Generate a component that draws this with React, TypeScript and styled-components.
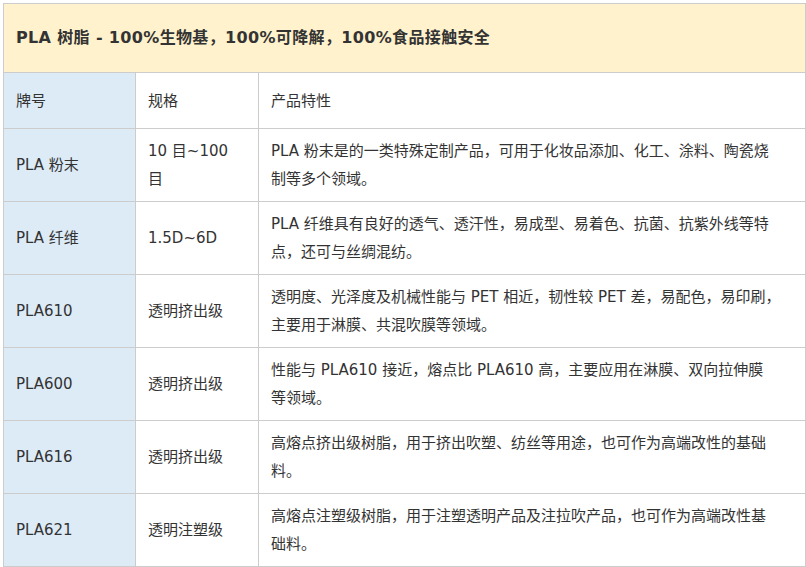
import React from "react";
import styled, { createGlobalStyle } from "styled-components";

const GlobalStyle = createGlobalStyle`
  html, body {
    margin: 0;
    padding: 0;
    overflow: hidden;
    background: #ffffff;
  }
  body {
    font-family: "DejaVu Sans", "Noto Sans CJK SC", sans-serif;
    color: #333333;
  }
`;

const Page = styled.div`
  padding: 3px 0 0 3px;
`;

const Table = styled.table`
  width: 802px;
  table-layout: fixed;
  border-collapse: collapse;
  font-size: 15px;
  line-height: 28px;
`;

const Row = styled.tr<{ $h?: number }>`
  height: ${(p) => (p.$h ? `${p.$h}px` : "auto")};
`;

const TitleCell = styled.td`
  background: #fff2cc;
  border: 1px solid #cccccc;
  padding: 8px 12px;
  font-size: 16px;
  font-weight: bold;
  letter-spacing: 0.35px;
  color: #333333;
  vertical-align: middle;
  white-space: nowrap;
`;

const Cell = styled.td<{ $kind?: "name" | "spec" | "desc" }>`
  border: 1px solid #cccccc;
  padding: 8px 12px;
  background: ${(p) => (p.$kind === "name" ? "#ddebf7" : "#ffffff")};
  vertical-align: middle;
  word-break: break-all;
  white-space: ${(p) => (p.$kind === "desc" ? "nowrap" : "normal")};
`;

const Line = styled.span`
  display: block;
`;

const NextSection = styled.td`
  background: #fff2cc;
  border: 1px solid #cccccc;
  height: 60px;
`;

type Item = { name: string; spec: string; desc: string[] };

const items: Item[] = [
  {
    name: "PLA 粉末",
    spec: "10 目~100 目",
    desc: [
      "PLA 粉末是的一类特殊定制产品，可用于化妆品添加、化工、涂料、陶瓷烧",
      "制等多个领域。",
    ],
  },
  {
    name: "PLA 纤维",
    spec: "1.5D~6D",
    desc: [
      "PLA 纤维具有良好的透气、透汗性，易成型、易着色、抗菌、抗紫外线等特",
      "点，还可与丝绸混纺。",
    ],
  },
  {
    name: "PLA610",
    spec: "透明挤出级",
    desc: [
      "透明度、光泽度及机械性能与 PET 相近，韧性较 PET 差，易配色，易印刷，",
      "主要用于淋膜、共混吹膜等领域。",
    ],
  },
  {
    name: "PLA600",
    spec: "透明挤出级",
    desc: [
      "性能与 PLA610 接近，熔点比 PLA610 高，主要应用在淋膜、双向拉伸膜",
      "等领域。",
    ],
  },
  {
    name: "PLA616",
    spec: "透明挤出级",
    desc: [
      "高熔点挤出级树脂，用于挤出吹塑、纺丝等用途，也可作为高端改性的基础",
      "料。",
    ],
  },
  {
    name: "PLA621",
    spec: "透明注塑级",
    desc: [
      "高熔点注塑级树脂，用于注塑透明产品及注拉吹产品，也可作为高端改性基",
      "础料。",
    ],
  },
];

export default function App() {
  return (
    <>
      <GlobalStyle />
      <Page>
        <Table>
          <colgroup>
            <col style={{ width: 132 }} />
            <col style={{ width: 123 }} />
            <col style={{ width: 547 }} />
          </colgroup>
          <tbody>
            <Row $h={69}>
              <TitleCell colSpan={3}>
                PLA 树脂 - 100%生物基，100%可降解，100%食品接触安全
              </TitleCell>
            </Row>
            <Row $h={56}>
              <Cell $kind="name">牌号</Cell>
              <Cell $kind="spec">规格</Cell>
              <Cell $kind="desc">产品特性</Cell>
            </Row>
            {items.map((it) => (
              <Row key={it.name} $h={73}>
                <Cell $kind="name">{it.name}</Cell>
                <Cell $kind="spec">{it.spec}</Cell>
                <Cell $kind="desc">
                  {it.desc.map((l) => (
                    <Line key={l}>{l}</Line>
                  ))}
                </Cell>
              </Row>
            ))}
            <tr>
              <NextSection colSpan={3} />
            </tr>
          </tbody>
        </Table>
      </Page>
    </>
  );
}
